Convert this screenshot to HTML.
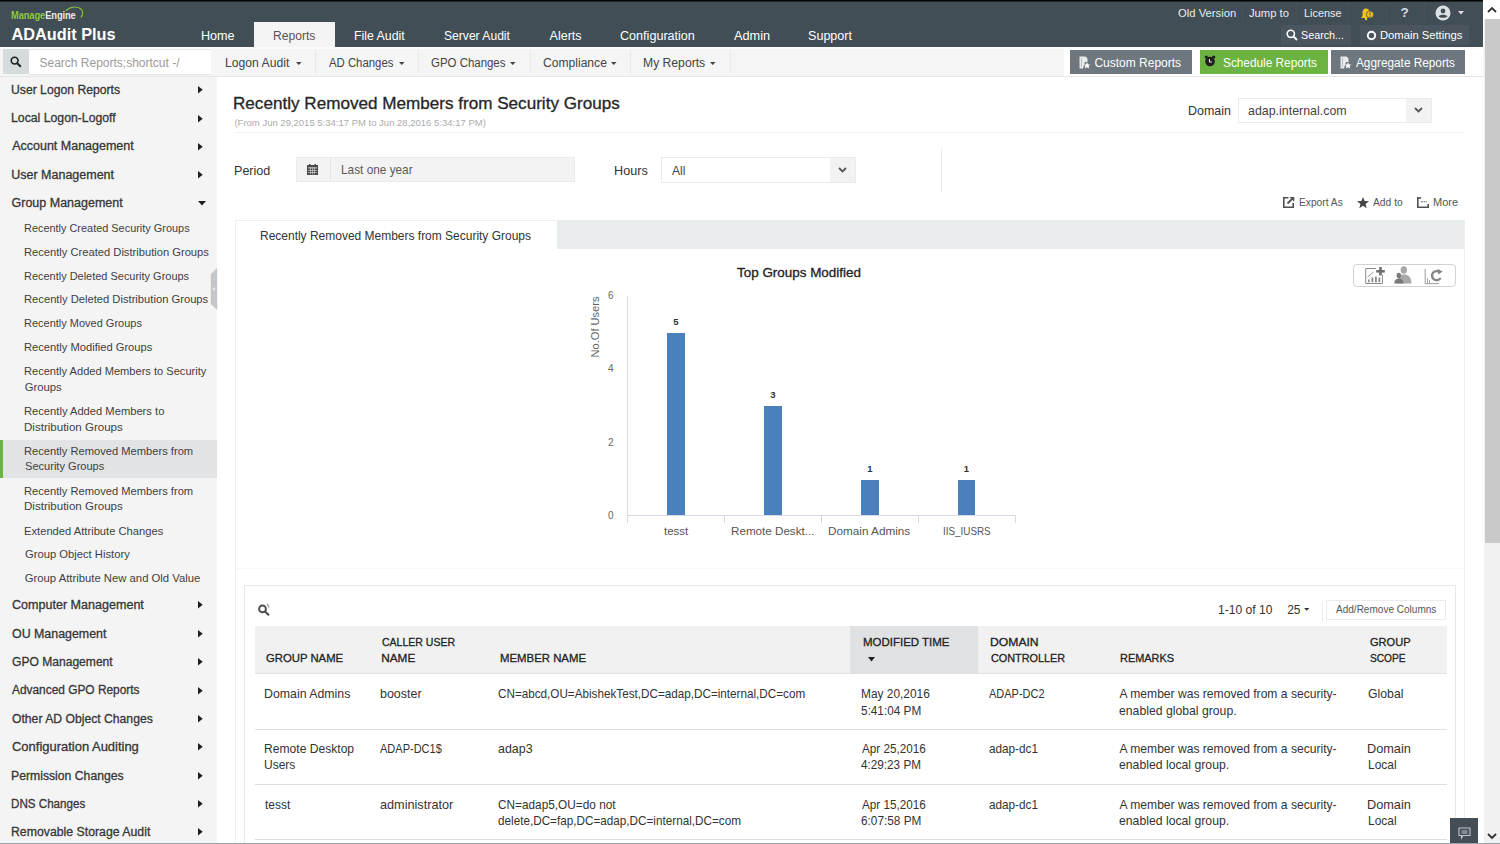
<!DOCTYPE html>
<html><head><meta charset="utf-8"><style>
*{box-sizing:border-box;margin:0;padding:0}
html,body{width:1500px;height:844px;overflow:hidden;background:#fff;font-family:"Liberation Sans",sans-serif;color:#333}
.a{position:absolute;white-space:nowrap;line-height:1}
svg{position:absolute;overflow:visible}
</style></head><body>
<div class="a" style="left:0px;top:0px;width:1483px;height:1px;background:#050505;"></div>
<div class="a" style="left:0px;top:1px;width:1483px;height:1px;background:#1f2427;"></div>
<div class="a" style="left:0px;top:2px;width:1483px;height:45px;background:#424e56;"></div>
<div class="a " style="left:11.30px;top:10.57px;font-size:10.2px;font-weight:700;color:#8dc641;transform:scaleX(0.915);transform-origin:0 0;letter-spacing:-0.1px">Manage<span style="color:#e6e9eb">Engine</span></div>
<svg style="left:63px;top:5px" width="22" height="16" viewBox="0 0 22 16"><path d="M3 5.5 C 8 1, 15 1, 18.5 4.5 C 20 6.5, 20 9.5, 18 12.5" fill="none" stroke="#8dc641" stroke-width="1.1"/></svg>
<div class="a " style="left:11.59px;top:25.90px;font-size:16.3px;font-weight:700;color:#ffffff;">ADAudit Plus</div>
<div class="a" style="left:254px;top:22px;width:81px;height:25px;background:#f4f4f4;"></div>
<div class="a " style="left:200.59px;top:30.02px;font-size:12.5px;font-weight:400;color:#fff;transform:scaleX(1.008);transform-origin:0 0;">Home</div>
<div class="a " style="left:273.03px;top:30.02px;font-size:12.5px;font-weight:400;color:#555;transform:scaleX(0.969);transform-origin:0 0;">Reports</div>
<div class="a " style="left:354.41px;top:30.02px;font-size:12.5px;font-weight:400;color:#fff;transform:scaleX(0.986);transform-origin:0 0;">File Audit</div>
<div class="a " style="left:444.16px;top:30.02px;font-size:12.5px;font-weight:400;color:#fff;transform:scaleX(0.968);transform-origin:0 0;">Server Audit</div>
<div class="a " style="left:549.60px;top:30.02px;font-size:12.5px;font-weight:400;color:#fff;">Alerts</div>
<div class="a " style="left:619.97px;top:30.02px;font-size:12.5px;font-weight:400;color:#fff;transform:scaleX(1.007);transform-origin:0 0;">Configuration</div>
<div class="a " style="left:733.50px;top:30.02px;font-size:12.5px;font-weight:400;color:#fff;transform:scaleX(1.017);transform-origin:0 0;">Admin</div>
<div class="a " style="left:807.73px;top:30.02px;font-size:12.5px;font-weight:400;color:#fff;transform:scaleX(1.006);transform-origin:0 0;">Support</div>
<div class="a " style="left:1178.29px;top:7.52px;font-size:11.2px;font-weight:400;color:#e9ecee;transform:scaleX(1.006);transform-origin:0 0;">Old Version</div>
<div class="a " style="left:1249.43px;top:7.52px;font-size:11.2px;font-weight:400;color:#e9ecee;transform:scaleX(1.005);transform-origin:0 0;">Jump to</div>
<div class="a " style="left:1303.73px;top:7.52px;font-size:11.2px;font-weight:400;color:#e9ecee;transform:scaleX(0.974);transform-origin:0 0;">License</div>
<div class="a" style="left:1242px;top:3px;width:1px;height:19px;background:#47525a;"></div>
<div class="a" style="left:1296px;top:3px;width:1px;height:19px;background:#47525a;"></div>
<div class="a" style="left:1348px;top:3px;width:1px;height:19px;background:#47525a;"></div>
<div class="a" style="left:1386px;top:3px;width:1px;height:19px;background:#47525a;"></div>
<div class="a" style="left:1424px;top:3px;width:1px;height:19px;background:#47525a;"></div>
<svg style="left:1359px;top:7px" width="16" height="13" viewBox="0 0 16 13"><path d="M2 11 L3.5 9 L3.5 5.5 C3.5 3 5 1.5 7 1.5 C9 1.5 10.5 3 10.5 5.5 L10.5 9 L12 11 Z" fill="#f0c419"/><circle cx="11" cy="7.5" r="3.6" fill="#f0c419" stroke="#424e56" stroke-width="0.8"/><rect x="10.5" y="5.5" width="1" height="2.6" fill="#424e56"/><rect x="10.5" y="8.8" width="1" height="1" fill="#424e56"/><circle cx="7" cy="12" r="1.2" fill="#f0c419"/></svg>
<div class="a " style="left:1400.50px;top:6.37px;font-size:13.5px;font-weight:700;color:#d9dde0;">?</div>
<svg style="left:1435px;top:5px" width="16" height="16" viewBox="0 0 16 16"><circle cx="8" cy="8" r="7.5" fill="#dde1e4"/><circle cx="8" cy="6" r="2.4" fill="#424e56"/><path d="M3.6 11.5 C4.5 9.2 11.5 9.2 12.4 11.5 C11 13.2 5 13.2 3.6 11.5Z" fill="#424e56"/></svg>
<svg style="left:1457.5px;top:10.5px" width="6" height="4" viewBox="0 0 6 4"><path d="M0 0 L6 0 L3 3.5Z" fill="#dde1e4"/></svg>
<div class="a" style="left:1280.5px;top:24.5px;width:70.5px;height:20.5px;background:#4a555d;"></div>
<div class="a" style="left:1359.5px;top:24.5px;width:109.5px;height:20.5px;background:#4a555d;"></div>
<svg style="left:1286px;top:29px" width="12" height="12" viewBox="0 0 12 12"><circle cx="4.8" cy="4.8" r="3.6" fill="none" stroke="#fff" stroke-width="1.6"/><path d="M7.5 7.5 L11 11" stroke="#fff" stroke-width="2"/></svg>
<div class="a " style="left:1301.32px;top:30.49px;font-size:11px;font-weight:400;color:#fff;transform:scaleX(0.978);transform-origin:0 0;">Search...</div>
<svg style="left:1366px;top:29.5px" width="11" height="11" viewBox="0 0 11 11"><circle cx="5.5" cy="5.5" r="3.7" fill="none" stroke="#fff" stroke-width="1.9"/></svg>
<div class="a " style="left:1379.80px;top:30.49px;font-size:11px;font-weight:400;color:#fff;transform:scaleX(1.020);transform-origin:0 0;">Domain Settings</div>
<div class="a" style="left:0px;top:47px;width:1484px;height:30px;background:#f5f5f5;border-bottom:1px solid #e6e6e6"></div>
<div class="a" style="left:0px;top:47px;width:1484px;height:2px;background:#fbfbfb;"></div>
<div class="a" style="left:3px;top:48.7px;width:26px;height:25.6px;background:#d6dbdd;"></div>
<div class="a" style="left:29px;top:48.7px;width:182px;height:26px;background:#e4e4e4;"></div>
<div class="a" style="left:29px;top:50.2px;width:182px;height:23.8px;background:#ffffff;"></div>
<svg style="left:9.5px;top:55.5px" width="12" height="12" viewBox="0 0 12 12"><circle cx="4.6" cy="4.6" r="3.4" fill="none" stroke="#1e1e1e" stroke-width="1.6"/><path d="M7.2 7.2 L10.8 10.8" stroke="#1e1e1e" stroke-width="2"/></svg>
<div class="a " style="left:39.46px;top:57.04px;font-size:12px;font-weight:400;color:#9a9a9a;">Search Reports;shortcut -/</div>
<div class="a " style="left:225.43px;top:57.24px;font-size:12px;font-weight:400;color:#444;transform:scaleX(1.014);transform-origin:0 0;">Logon Audit</div>
<svg style="left:296px;top:62px" width="5.5" height="3" viewBox="0 0 5.5 3"><path d="M0 0 L5.5 0 L2.75 3Z" fill="#444"/></svg>
<div class="a" style="left:315px;top:50px;width:1px;height:24px;background:#e9e9e9;"></div>
<div class="a " style="left:329.00px;top:57.24px;font-size:12px;font-weight:400;color:#444;transform:scaleX(0.946);transform-origin:0 0;">AD Changes</div>
<svg style="left:398.5px;top:62px" width="5.5" height="3" viewBox="0 0 5.5 3"><path d="M0 0 L5.5 0 L2.75 3Z" fill="#444"/></svg>
<div class="a" style="left:418px;top:50px;width:1px;height:24px;background:#e9e9e9;"></div>
<div class="a " style="left:431.03px;top:57.24px;font-size:12px;font-weight:400;color:#444;transform:scaleX(0.954);transform-origin:0 0;">GPO Changes</div>
<svg style="left:510px;top:62px" width="5.5" height="3" viewBox="0 0 5.5 3"><path d="M0 0 L5.5 0 L2.75 3Z" fill="#444"/></svg>
<div class="a" style="left:529.5px;top:50px;width:1px;height:24px;background:#e9e9e9;"></div>
<div class="a " style="left:542.70px;top:57.24px;font-size:12px;font-weight:400;color:#444;transform:scaleX(1.008);transform-origin:0 0;">Compliance</div>
<svg style="left:611px;top:62px" width="5.5" height="3" viewBox="0 0 5.5 3"><path d="M0 0 L5.5 0 L2.75 3Z" fill="#444"/></svg>
<div class="a" style="left:630px;top:50px;width:1px;height:24px;background:#e9e9e9;"></div>
<div class="a " style="left:643.33px;top:57.24px;font-size:12px;font-weight:400;color:#444;transform:scaleX(1.013);transform-origin:0 0;">My Reports</div>
<svg style="left:710px;top:62px" width="5.5" height="3" viewBox="0 0 5.5 3"><path d="M0 0 L5.5 0 L2.75 3Z" fill="#444"/></svg>
<div class="a" style="left:730px;top:50px;width:1px;height:24px;background:#e9e9e9;"></div>
<div class="a" style="left:1064px;top:48.5px;width:419px;height:27.7px;background:#ffffff;"></div>
<div class="a" style="left:1070px;top:50.3px;width:121.6px;height:23.3px;background:#6d777d;"></div>
<div class="a" style="left:1199.5px;top:50.3px;width:128.8px;height:23.3px;background:#6cb342;"></div>
<div class="a" style="left:1331px;top:50.3px;width:134.3px;height:23.3px;background:#6d777d;"></div>
<svg style="left:1079px;top:56px" width="12" height="13" viewBox="0 0 12 13"><path d="M0.5 0.5 L6.5 0.5 L8.5 2.5 L8.5 6 L6 6 L4 12.5 L0.5 12.5Z" fill="#e8eaeb"/><path d="M2 2 L3 2 L3 11 L2 11Z" fill="#6d777d" opacity="0.35"/><path d="M8 6.2 L9 8.4 L11.4 8.6 L9.6 10.1 L10.2 12.5 L8 11.2 L5.8 12.5 L6.4 10.1 L4.6 8.6 L7 8.4Z" fill="#fff"/></svg>
<div class="a " style="left:1094.40px;top:57.24px;font-size:12px;font-weight:400;color:#fff;">Custom Reports</div>
<svg style="left:1204px;top:55px" width="12" height="12" viewBox="0 0 12 12"><circle cx="6" cy="6.5" r="4.8" fill="#1e1e1e"/><circle cx="2.3" cy="2" r="1.6" fill="#1e1e1e"/><circle cx="9.7" cy="2" r="1.6" fill="#1e1e1e"/><path d="M5.5 4 L5.5 7 L8 7" stroke="#ddd" stroke-width="1.1" fill="none"/></svg>
<div class="a " style="left:1223.37px;top:57.24px;font-size:12px;font-weight:400;color:#fff;transform:scaleX(0.985);transform-origin:0 0;">Schedule Reports</div>
<svg style="left:1340px;top:56px" width="12" height="13" viewBox="0 0 12 13"><path d="M0.5 0.5 L6.5 0.5 L8.5 2.5 L8.5 6 L6 6 L4 12.5 L0.5 12.5Z" fill="#e8eaeb"/><path d="M2 2 L3 2 L3 11 L2 11Z" fill="#6d777d" opacity="0.35"/><path d="M8 6.2 L9 8.4 L11.4 8.6 L9.6 10.1 L10.2 12.5 L8 11.2 L5.8 12.5 L6.4 10.1 L4.6 8.6 L7 8.4Z" fill="#fff"/></svg>
<div class="a " style="left:1356.40px;top:57.24px;font-size:12px;font-weight:400;color:#fff;transform:scaleX(0.983);transform-origin:0 0;">Aggregate Reports</div>
<div class="a" style="left:0px;top:77px;width:216.7px;height:767px;background:#f4f4f4;"></div>
<div class="a " style="left:11.24px;top:84.22px;font-size:12.5px;font-weight:400;color:#363636;transform:scaleX(0.975);transform-origin:0 0;-webkit-text-stroke:0.3px #363636;">User Logon Reports</div>
<svg style="left:197.6px;top:86.4px" width="5" height="7.4" viewBox="0 0 5 7.4"><path d="M0 0 L4.7 3.7 L0 7.4Z" fill="#1e1e1e"/></svg>
<div class="a " style="left:11.17px;top:112.32px;font-size:12.5px;font-weight:400;color:#363636;transform:scaleX(0.980);transform-origin:0 0;-webkit-text-stroke:0.3px #363636;">Local Logon-Logoff</div>
<svg style="left:197.6px;top:114.5px" width="5" height="7.4" viewBox="0 0 5 7.4"><path d="M0 0 L4.7 3.7 L0 7.4Z" fill="#1e1e1e"/></svg>
<div class="a " style="left:12.15px;top:140.32px;font-size:12.5px;font-weight:400;color:#363636;-webkit-text-stroke:0.3px #363636;">Account Management</div>
<svg style="left:197.6px;top:142.5px" width="5" height="7.4" viewBox="0 0 5 7.4"><path d="M0 0 L4.7 3.7 L0 7.4Z" fill="#1e1e1e"/></svg>
<div class="a " style="left:11.21px;top:169.12px;font-size:12.5px;font-weight:400;color:#363636;-webkit-text-stroke:0.3px #363636;">User Management</div>
<svg style="left:197.6px;top:171.3px" width="5" height="7.4" viewBox="0 0 5 7.4"><path d="M0 0 L4.7 3.7 L0 7.4Z" fill="#1e1e1e"/></svg>
<div class="a " style="left:11.53px;top:196.82px;font-size:12.5px;font-weight:400;color:#363636;-webkit-text-stroke:0.3px #363636;">Group Management</div>
<svg style="left:198px;top:201.2px" width="8" height="5" viewBox="0 0 8 5"><path d="M0 0 L8 0 L4 4.4Z" fill="#1e1e1e"/></svg>
<div class="a" style="left:0px;top:439.5px;width:216.7px;height:38px;background:#e2e3e5;"></div>
<div class="a" style="left:0px;top:439.5px;width:3px;height:38px;background:#6cb33f;"></div>
<div class="a " style="left:24.43px;top:223.13px;font-size:11.3px;font-weight:400;color:#3f3f3f;transform:scaleX(0.966);transform-origin:0 0;">Recently Created Security Groups</div>
<div class="a " style="left:24.41px;top:246.63px;font-size:11.3px;font-weight:400;color:#3f3f3f;transform:scaleX(0.988);transform-origin:0 0;">Recently Created Distribution Groups</div>
<div class="a " style="left:24.42px;top:270.53px;font-size:11.3px;font-weight:400;color:#3f3f3f;transform:scaleX(0.970);transform-origin:0 0;">Recently Deleted Security Groups</div>
<div class="a " style="left:24.40px;top:294.43px;font-size:11.3px;font-weight:400;color:#3f3f3f;transform:scaleX(0.991);transform-origin:0 0;">Recently Deleted Distribution Groups</div>
<div class="a " style="left:24.42px;top:318.33px;font-size:11.3px;font-weight:400;color:#3f3f3f;transform:scaleX(0.973);transform-origin:0 0;">Recently Moved Groups</div>
<div class="a " style="left:24.41px;top:342.13px;font-size:11.3px;font-weight:400;color:#3f3f3f;transform:scaleX(0.987);transform-origin:0 0;">Recently Modified Groups</div>
<div class="a " style="left:24.41px;top:366.43px;font-size:11.3px;font-weight:400;color:#3f3f3f;transform:scaleX(0.981);transform-origin:0 0;">Recently Added Members to Security</div>
<div class="a " style="left:24.73px;top:381.83px;font-size:11.3px;font-weight:400;color:#3f3f3f;">Groups</div>
<div class="a " style="left:24.41px;top:406.23px;font-size:11.3px;font-weight:400;color:#3f3f3f;transform:scaleX(0.989);transform-origin:0 0;">Recently Added Members to</div>
<div class="a " style="left:24.38px;top:421.63px;font-size:11.3px;font-weight:400;color:#3f3f3f;transform:scaleX(1.022);transform-origin:0 0;">Distribution Groups</div>
<div class="a " style="left:24.41px;top:446.03px;font-size:11.3px;font-weight:400;color:#3f3f3f;transform:scaleX(0.987);transform-origin:0 0;">Recently Removed Members from</div>
<div class="a " style="left:24.80px;top:461.43px;font-size:11.3px;font-weight:400;color:#3f3f3f;transform:scaleX(0.979);transform-origin:0 0;">Security Groups</div>
<div class="a " style="left:24.41px;top:485.73px;font-size:11.3px;font-weight:400;color:#3f3f3f;transform:scaleX(0.987);transform-origin:0 0;">Recently Removed Members from</div>
<div class="a " style="left:24.38px;top:501.13px;font-size:11.3px;font-weight:400;color:#3f3f3f;transform:scaleX(1.022);transform-origin:0 0;">Distribution Groups</div>
<div class="a " style="left:24.41px;top:525.53px;font-size:11.3px;font-weight:400;color:#3f3f3f;transform:scaleX(0.990);transform-origin:0 0;">Extended Attribute Changes</div>
<div class="a " style="left:24.74px;top:549.23px;font-size:11.3px;font-weight:400;color:#3f3f3f;transform:scaleX(0.993);transform-origin:0 0;">Group Object History</div>
<div class="a " style="left:24.73px;top:573.33px;font-size:11.3px;font-weight:400;color:#3f3f3f;">Group Attribute New and Old Value</div>
<svg style="left:209.5px;top:267.5px" width="8" height="42" viewBox="0 0 8 42"><path d="M7.2 0 L7.2 42 L0.8 36 L0.8 6Z" fill="#c3c7ca"/><path d="M2.6 21 L4.6 19 L4.6 23Z" fill="#f4f4f4"/></svg>
<div class="a " style="left:11.52px;top:599.22px;font-size:12.5px;font-weight:400;color:#363636;transform:scaleX(1.004);transform-origin:0 0;-webkit-text-stroke:0.3px #363636;">Computer Management</div>
<svg style="left:197.6px;top:601.4px" width="5" height="7.4" viewBox="0 0 5 7.4"><path d="M0 0 L4.7 3.7 L0 7.4Z" fill="#1e1e1e"/></svg>
<div class="a " style="left:11.59px;top:627.60px;font-size:12.5px;font-weight:400;color:#363636;transform:scaleX(0.992);transform-origin:0 0;-webkit-text-stroke:0.3px #363636;">OU Management</div>
<svg style="left:197.6px;top:629.78px" width="5" height="7.4" viewBox="0 0 5 7.4"><path d="M0 0 L4.7 3.7 L0 7.4Z" fill="#1e1e1e"/></svg>
<div class="a " style="left:11.55px;top:655.98px;font-size:12.5px;font-weight:400;color:#363636;transform:scaleX(0.966);transform-origin:0 0;-webkit-text-stroke:0.3px #363636;">GPO Management</div>
<svg style="left:197.6px;top:658.16px" width="5" height="7.4" viewBox="0 0 5 7.4"><path d="M0 0 L4.7 3.7 L0 7.4Z" fill="#1e1e1e"/></svg>
<div class="a " style="left:12.15px;top:684.36px;font-size:12.5px;font-weight:400;color:#363636;transform:scaleX(0.951);transform-origin:0 0;-webkit-text-stroke:0.3px #363636;">Advanced GPO Reports</div>
<svg style="left:197.6px;top:686.54px" width="5" height="7.4" viewBox="0 0 5 7.4"><path d="M0 0 L4.7 3.7 L0 7.4Z" fill="#1e1e1e"/></svg>
<div class="a " style="left:11.60px;top:712.74px;font-size:12.5px;font-weight:400;color:#363636;transform:scaleX(0.974);transform-origin:0 0;-webkit-text-stroke:0.3px #363636;">Other AD Object Changes</div>
<svg style="left:197.6px;top:714.92px" width="5" height="7.4" viewBox="0 0 5 7.4"><path d="M0 0 L4.7 3.7 L0 7.4Z" fill="#1e1e1e"/></svg>
<div class="a " style="left:11.50px;top:741.12px;font-size:12.5px;font-weight:400;color:#363636;transform:scaleX(1.037);transform-origin:0 0;-webkit-text-stroke:0.3px #363636;">Configuration Auditing</div>
<svg style="left:197.6px;top:743.3px" width="5" height="7.4" viewBox="0 0 5 7.4"><path d="M0 0 L4.7 3.7 L0 7.4Z" fill="#1e1e1e"/></svg>
<div class="a " style="left:11.17px;top:769.50px;font-size:12.5px;font-weight:400;color:#363636;transform:scaleX(0.977);transform-origin:0 0;-webkit-text-stroke:0.3px #363636;">Permission Changes</div>
<svg style="left:197.6px;top:771.68px" width="5" height="7.4" viewBox="0 0 5 7.4"><path d="M0 0 L4.7 3.7 L0 7.4Z" fill="#1e1e1e"/></svg>
<div class="a " style="left:11.22px;top:797.88px;font-size:12.5px;font-weight:400;color:#363636;transform:scaleX(0.929);transform-origin:0 0;-webkit-text-stroke:0.3px #363636;">DNS Changes</div>
<svg style="left:197.6px;top:800.06px" width="5" height="7.4" viewBox="0 0 5 7.4"><path d="M0 0 L4.7 3.7 L0 7.4Z" fill="#1e1e1e"/></svg>
<div class="a " style="left:11.17px;top:826.26px;font-size:12.5px;font-weight:400;color:#363636;transform:scaleX(0.983);transform-origin:0 0;-webkit-text-stroke:0.3px #363636;">Removable Storage Audit</div>
<svg style="left:197.6px;top:828.4399999999999px" width="5" height="7.4" viewBox="0 0 5 7.4"><path d="M0 0 L4.7 3.7 L0 7.4Z" fill="#1e1e1e"/></svg>
<div class="a " style="left:233.38px;top:95.78px;font-size:16.8px;font-weight:400;color:#262626;transform:scaleX(1.019);transform-origin:0 0;-webkit-text-stroke:0.3px #262626;">Recently Removed Members from Security Groups</div>
<div class="a " style="left:234.43px;top:117.56px;font-size:9.5px;font-weight:400;color:#ababab;">(From Jun 29,2015 5:34:17 PM to Jun 28,2016 5:34:17 PM)</div>
<div class="a" style="left:235px;top:132px;width:1230px;height:1px;background:#f1f1f1;"></div>
<div class="a " style="left:1188.40px;top:104.50px;font-size:12.4px;font-weight:400;color:#333;transform:scaleX(1.007);transform-origin:0 0;">Domain</div>
<div class="a" style="left:1237.6px;top:98px;width:194px;height:24.6px;background:#fff;border:1px solid #ebebeb"></div>
<div class="a" style="left:1405.6px;top:98px;width:26px;height:24.6px;background:#f2f2f2;border:1px solid #ebebeb;border-left:none"></div>
<div class="a " style="left:1248.10px;top:104.67px;font-size:12.2px;font-weight:400;color:#444;transform:scaleX(1.018);transform-origin:0 0;">adap.internal.com</div>
<svg style="left:1414px;top:107px" width="9" height="6" viewBox="0 0 9 6"><path d="M1 1 L4.5 4.5 L8 1" fill="none" stroke="#555" stroke-width="1.8"/></svg>
<div class="a " style="left:233.99px;top:164.60px;font-size:12.4px;font-weight:400;color:#333;transform:scaleX(1.014);transform-origin:0 0;">Period</div>
<div class="a" style="left:296px;top:157px;width:278.5px;height:24.5px;background:#f3f3f3;border:1px solid #ebebeb"></div>
<div class="a" style="left:330px;top:158px;width:1px;height:22.5px;background:#e4e4e4;"></div>
<svg style="left:307px;top:164px" width="11" height="11" viewBox="0 0 11 11"><rect x="0" y="1" width="11" height="10" fill="#4a4a4a"/><rect x="2" y="0" width="1.5" height="2" fill="#4a4a4a"/><rect x="7.5" y="0" width="1.5" height="2" fill="#4a4a4a"/><g fill="#f3f3f3"><rect x="1" y="3.5" width="9" height="0.8"/><rect x="1" y="6" width="9" height="0.5"/><rect x="1" y="8.2" width="9" height="0.5"/><rect x="3.2" y="3.5" width="0.5" height="7"/><rect x="5.3" y="3.5" width="0.5" height="7"/><rect x="7.4" y="3.5" width="0.5" height="7"/></g></svg>
<div class="a " style="left:340.65px;top:164.07px;font-size:12.2px;font-weight:400;color:#5a5a5a;transform:scaleX(0.970);transform-origin:0 0;">Last one year</div>
<div class="a " style="left:613.69px;top:164.60px;font-size:12.4px;font-weight:400;color:#333;transform:scaleX(1.020);transform-origin:0 0;">Hours</div>
<div class="a" style="left:661px;top:157.2px;width:194.5px;height:26.3px;background:#fff;border:1px solid #ebebeb"></div>
<div class="a" style="left:830px;top:157.2px;width:25.5px;height:26.3px;background:#f2f2f2;border:1px solid #ebebeb;border-left:none"></div>
<div class="a " style="left:672.40px;top:165.24px;font-size:12px;font-weight:400;color:#444;transform:scaleX(1.005);transform-origin:0 0;">All</div>
<svg style="left:838px;top:166.5px" width="9" height="6" viewBox="0 0 9 6"><path d="M1 1 L4.5 4.5 L8 1" fill="none" stroke="#555" stroke-width="1.8"/></svg>
<div class="a" style="left:940.5px;top:147.5px;width:1px;height:44.5px;background:#ededed;"></div>
<svg style="left:1282.5px;top:197.3px" width="12" height="11" viewBox="0 0 12 11"><path d="M5.5 0.8 L0.8 0.8 L0.8 10.2 L10.2 10.2 L10.2 6" fill="none" stroke="#505050" stroke-width="1.6"/><path d="M4.5 6.5 L9.5 1.5" stroke="#505050" stroke-width="1.8"/><path d="M6.5 0 L11.3 0 L11.3 4.8Z" fill="#505050"/></svg>
<div class="a " style="left:1298.58px;top:197.43px;font-size:10.6px;font-weight:400;color:#555;transform:scaleX(0.965);transform-origin:0 0;">Export As</div>
<svg style="left:1357px;top:196.5px" width="12" height="11.5" viewBox="0 0 12 11.5"><path d="M6 0 L7.6 4 L12 4.2 L8.5 6.9 L9.7 11.3 L6 8.8 L2.3 11.3 L3.5 6.9 L0 4.2 L4.4 4Z" fill="#444"/></svg>
<div class="a " style="left:1373.00px;top:197.43px;font-size:10.6px;font-weight:400;color:#555;transform:scaleX(0.970);transform-origin:0 0;">Add to</div>
<svg style="left:1416.8px;top:197.3px" width="12" height="11" viewBox="0 0 12 11"><path d="M0.8 0 L0.8 10.2 L11.2 10.2 L11.2 7" fill="none" stroke="#505050" stroke-width="1.6"/><path d="M0.8 1 L4 1" stroke="#505050" stroke-width="1.6"/><path d="M4 4.8 L10 4.8" stroke="#505050" stroke-width="1.1" stroke-dasharray="1.6 1"/></svg>
<div class="a " style="left:1432.71px;top:197.43px;font-size:10.6px;font-weight:400;color:#555;transform:scaleX(1.044);transform-origin:0 0;">More</div>
<div class="a" style="left:235px;top:220px;width:1230px;height:624px;background:#fff;border:1px solid #eeeeee;border-bottom:none"></div>
<div class="a" style="left:557px;top:221px;width:907px;height:28px;background:#e9eced;"></div>
<div class="a " style="left:260.44px;top:230.17px;font-size:12.2px;font-weight:400;color:#333;transform:scaleX(0.983);transform-origin:0 0;">Recently Removed Members from Security Groups</div>
<div class="a " style="left:736.88px;top:266.00px;font-size:13px;font-weight:400;color:#222;transform:scaleX(1.033);transform-origin:0 0;-webkit-text-stroke:0.3px #222;">Top Groups Modified</div>
<div class="a" style="left:1353.3px;top:264px;width:102.3px;height:22.5px;background:#fff;border:1px solid #d2d2d2;border-radius:4px"></div>
<svg style="left:1350px;top:260px" width="110" height="30" viewBox="0 0 110 30"><path d="M26 8.5 L15.7 8.5 L15.7 23.5 L32.5 23.5 L32.5 15" fill="none" stroke="#8c8c8c" stroke-width="1"/><g fill="#8c8c8c"><rect x="18" y="19.5" width="1.6" height="2.8"/><rect x="21.5" y="17.5" width="1.8" height="4.8"/><rect x="25" y="16.5" width="1.8" height="5.8"/><rect x="28.5" y="17.5" width="1.8" height="4.8"/></g><path d="M17.5 17 L23.5 12" stroke="#9a9a9a" stroke-width="1" fill="none"/><g fill="#6e6e6e"><rect x="29.2" y="7" width="2.6" height="8.5"/><rect x="26.2" y="10" width="8.6" height="2.6"/></g><g fill="#a8a8a8"><ellipse cx="53.8" cy="10" rx="3.2" ry="3.8"/><path d="M47 23.6 C47 17 50 14.5 54 14.5 C58 14.5 61.5 17 61.5 23.6Z"/></g><g fill="#7a7a7a"><ellipse cx="48.8" cy="15.4" rx="2.2" ry="2.7"/><path d="M44.3 23.6 C44.3 20 46 18.8 48.8 18.8 C51.6 18.8 53.5 20 53.5 23.6Z"/></g><path d="M75.2 9 L75.2 23.6 L89 23.6" fill="none" stroke="#9a9a9a" stroke-width="1"/><g fill="#a8a8a8"><rect x="77" y="18" width="1" height="5.6"/><rect x="79" y="20" width="1" height="3.6"/></g><path d="M90 12.5 A4.6 4.6 0 1 0 90.6 18" fill="none" stroke="#858585" stroke-width="2.3"/><path d="M87.5 8.8 L92.6 11.6 L88.4 14.6Z" fill="#858585"/></svg>
<div class="a" style="left:627px;top:296px;width:1px;height:220px;background:#d6dbe6;"></div>
<div class="a" style="left:627px;top:515px;width:389px;height:1px;background:#d6dbe6;"></div>
<div class="a" style="left:627px;top:515px;width:1px;height:8px;background:#d6dbe6;"></div>
<div class="a" style="left:724px;top:515px;width:1px;height:8px;background:#d6dbe6;"></div>
<div class="a" style="left:821px;top:515px;width:1px;height:8px;background:#d6dbe6;"></div>
<div class="a" style="left:918px;top:515px;width:1px;height:8px;background:#d6dbe6;"></div>
<div class="a" style="left:1015px;top:515px;width:1px;height:8px;background:#d6dbe6;"></div>
<div class="a " style="left:608.00px;top:291.14px;font-size:10px;font-weight:400;color:#666;">6</div>
<div class="a " style="left:608.00px;top:364.34px;font-size:10px;font-weight:400;color:#666;">4</div>
<div class="a " style="left:608.00px;top:437.54px;font-size:10px;font-weight:400;color:#666;">2</div>
<div class="a " style="left:608.00px;top:510.83px;font-size:10px;font-weight:400;color:#666;">0</div>
<div class="a" style="left:595.5px;top:326.5px;font-size:11.1px;color:#666;transform:translate(-50%,-50%) rotate(-90deg)">No.Of Users</div>
<div class="a" style="left:667px;top:333px;width:17.6px;height:182px;background:#4a81bd;"></div>
<div class="a" style="left:675.8px;top:316.5px;font-size:9.5px;font-weight:700;color:#333;transform:translateX(-50%)">5</div>
<div class="a" style="left:764px;top:406px;width:17.6px;height:109px;background:#4a81bd;"></div>
<div class="a" style="left:772.8px;top:389.5px;font-size:9.5px;font-weight:700;color:#333;transform:translateX(-50%)">3</div>
<div class="a" style="left:861px;top:480px;width:17.6px;height:35px;background:#4a81bd;"></div>
<div class="a" style="left:869.8px;top:463.5px;font-size:9.5px;font-weight:700;color:#333;transform:translateX(-50%)">1</div>
<div class="a" style="left:957.5px;top:480px;width:17.6px;height:35px;background:#4a81bd;"></div>
<div class="a" style="left:966.3px;top:463.5px;font-size:9.5px;font-weight:700;color:#333;transform:translateX(-50%)">1</div>
<div class="a " style="left:663.83px;top:524.98px;font-size:11.6px;font-weight:400;color:#555;transform:scaleX(0.990);transform-origin:0 0;">tesst</div>
<div class="a " style="left:731.07px;top:524.98px;font-size:11.6px;font-weight:400;color:#555;transform:scaleX(1.004);transform-origin:0 0;">Remote Deskt...</div>
<div class="a " style="left:828.06px;top:524.98px;font-size:11.6px;font-weight:400;color:#555;transform:scaleX(1.013);transform-origin:0 0;">Domain Admins</div>
<div class="a " style="left:942.51px;top:524.98px;font-size:11.6px;font-weight:400;color:#555;transform:scaleX(0.850);transform-origin:0 0;">IIS_IUSRS</div>
<div class="a" style="left:236px;top:568px;width:1228px;height:1px;background:#f8f8f8;"></div>
<div class="a" style="left:244.4px;top:585.4px;width:1211.5px;height:259px;background:#fff;border:1px solid #e8e8e8;border-bottom:none"></div>
<svg style="left:258px;top:603px" width="13" height="14" viewBox="0 0 13 14"><circle cx="4.5" cy="5.9" r="3.4" fill="none" stroke="#4e4e4e" stroke-width="1.9"/><path d="M7 8.4 L11 12.2" stroke="#4e4e4e" stroke-width="2.1"/><path d="M9.3 0.8 L10.9 4.6" stroke="#9a9a9a" stroke-width="1.4"/></svg>
<div class="a " style="left:1217.99px;top:604.44px;font-size:12px;font-weight:400;color:#333;transform:scaleX(1.006);transform-origin:0 0;">1-10 of 10</div>
<div class="a " style="left:1287.20px;top:603.54px;font-size:12px;font-weight:400;color:#333;">25</div>
<svg style="left:1304px;top:608px" width="5.4" height="2.8" viewBox="0 0 5.4 2.8"><path d="M0 0 L5.4 0 L2.7 2.8Z" fill="#333"/></svg>
<div class="a" style="left:1321.5px;top:600px;width:1px;height:21px;background:#ededed;"></div>
<div class="a" style="left:1326px;top:599.8px;width:119.7px;height:20.7px;background:#fff;border:1px solid #ececec"></div>
<div class="a " style="left:1335.90px;top:605.48px;font-size:10.3px;font-weight:400;color:#555;transform:scaleX(0.974);transform-origin:0 0;">Add/Remove Columns</div>
<div class="a" style="left:254.6px;top:625.6px;width:1192px;height:48px;background:#f1f1f1;border-bottom:1px solid #e0e0e0"></div>
<div class="a" style="left:850.4px;top:625.6px;width:127.2px;height:47.4px;background:#e0e1e2;"></div>
<div class="a " style="left:266.18px;top:652.91px;font-size:11.8px;font-weight:400;color:#222;transform:scaleX(0.959);transform-origin:0 0;-webkit-text-stroke:0.3px #222;">GROUP NAME</div>
<div class="a " style="left:381.62px;top:636.51px;font-size:11.8px;font-weight:400;color:#222;transform:scaleX(0.892);transform-origin:0 0;-webkit-text-stroke:0.3px #222;">CALLER USER</div>
<div class="a " style="left:381.20px;top:652.91px;font-size:11.8px;font-weight:400;color:#222;-webkit-text-stroke:0.3px #222;">NAME</div>
<div class="a " style="left:500.24px;top:652.91px;font-size:11.8px;font-weight:400;color:#222;transform:scaleX(0.965);transform-origin:0 0;-webkit-text-stroke:0.3px #222;">MEMBER NAME</div>
<div class="a " style="left:862.83px;top:636.51px;font-size:11.8px;font-weight:400;color:#222;transform:scaleX(0.973);transform-origin:0 0;-webkit-text-stroke:0.3px #222;">MODIFIED TIME</div>
<div class="a " style="left:990.18px;top:636.51px;font-size:11.8px;font-weight:400;color:#222;transform:scaleX(1.031);transform-origin:0 0;-webkit-text-stroke:0.3px #222;">DOMAIN</div>
<div class="a " style="left:990.61px;top:652.91px;font-size:11.8px;font-weight:400;color:#222;transform:scaleX(0.920);transform-origin:0 0;-webkit-text-stroke:0.3px #222;">CONTROLLER</div>
<div class="a " style="left:1120.18px;top:652.91px;font-size:11.8px;font-weight:400;color:#222;transform:scaleX(0.927);transform-origin:0 0;-webkit-text-stroke:0.3px #222;">REMARKS</div>
<div class="a " style="left:1369.60px;top:636.51px;font-size:11.8px;font-weight:400;color:#222;transform:scaleX(0.937);transform-origin:0 0;-webkit-text-stroke:0.3px #222;">GROUP</div>
<div class="a " style="left:1369.69px;top:652.91px;font-size:11.8px;font-weight:400;color:#222;transform:scaleX(0.861);transform-origin:0 0;-webkit-text-stroke:0.3px #222;">SCOPE</div>
<svg style="left:868px;top:656.5px" width="7" height="4.5" viewBox="0 0 7 4.5"><path d="M0 0 L7 0 L3.5 4.5Z" fill="#222"/></svg>
<div class="a " style="left:264.01px;top:688.36px;font-size:12.1px;font-weight:400;color:#333;transform:scaleX(1.020);transform-origin:0 0;">Domain Admins</div>
<div class="a " style="left:379.59px;top:688.36px;font-size:12.1px;font-weight:400;color:#333;transform:scaleX(1.031);transform-origin:0 0;">booster</div>
<div class="a " style="left:498.31px;top:688.36px;font-size:12.1px;font-weight:400;color:#333;transform:scaleX(0.967);transform-origin:0 0;">CN=abcd,OU=AbishekTest,DC=adap,DC=internal,DC=com</div>
<div class="a " style="left:860.65px;top:688.36px;font-size:12.1px;font-weight:400;color:#333;transform:scaleX(0.984);transform-origin:0 0;">May 20,2016</div>
<div class="a " style="left:861.13px;top:704.56px;font-size:12.1px;font-weight:400;color:#333;transform:scaleX(0.974);transform-origin:0 0;">5:41:04 PM</div>
<div class="a " style="left:989.00px;top:688.36px;font-size:12.1px;font-weight:400;color:#333;transform:scaleX(0.908);transform-origin:0 0;">ADAP-DC2</div>
<div class="a " style="left:1119.50px;top:688.36px;font-size:12.1px;font-weight:400;color:#333;">A member was removed from a security-</div>
<div class="a " style="left:1119.01px;top:704.56px;font-size:12.1px;font-weight:400;color:#333;transform:scaleX(1.011);transform-origin:0 0;">enabled global group.</div>
<div class="a " style="left:1367.89px;top:688.36px;font-size:12.1px;font-weight:400;color:#333;transform:scaleX(1.013);transform-origin:0 0;">Global</div>
<div class="a " style="left:264.03px;top:743.16px;font-size:12.1px;font-weight:400;color:#333;">Remote Desktop</div>
<div class="a " style="left:264.10px;top:759.36px;font-size:12.1px;font-weight:400;color:#333;transform:scaleX(0.992);transform-origin:0 0;">Users</div>
<div class="a " style="left:380.40px;top:743.16px;font-size:12.1px;font-weight:400;color:#333;transform:scaleX(0.910);transform-origin:0 0;">ADAP-DC1$</div>
<div class="a " style="left:498.40px;top:743.16px;font-size:12.1px;font-weight:400;color:#333;transform:scaleX(1.028);transform-origin:0 0;">adap3</div>
<div class="a " style="left:861.60px;top:743.16px;font-size:12.1px;font-weight:400;color:#333;transform:scaleX(0.969);transform-origin:0 0;">Apr 25,2016</div>
<div class="a " style="left:861.37px;top:759.36px;font-size:12.1px;font-weight:400;color:#333;transform:scaleX(0.970);transform-origin:0 0;">4:29:23 PM</div>
<div class="a " style="left:988.53px;top:743.16px;font-size:12.1px;font-weight:400;color:#333;transform:scaleX(0.971);transform-origin:0 0;">adap-dc1</div>
<div class="a " style="left:1119.50px;top:743.16px;font-size:12.1px;font-weight:400;color:#333;">A member was removed from a security-</div>
<div class="a " style="left:1119.01px;top:759.36px;font-size:12.1px;font-weight:400;color:#333;transform:scaleX(1.011);transform-origin:0 0;">enabled local group.</div>
<div class="a " style="left:1367.48px;top:743.16px;font-size:12.1px;font-weight:400;color:#333;transform:scaleX(1.052);transform-origin:0 0;">Domain</div>
<div class="a " style="left:1367.54px;top:759.36px;font-size:12.1px;font-weight:400;color:#333;transform:scaleX(0.987);transform-origin:0 0;">Local</div>
<div class="a " style="left:264.82px;top:798.56px;font-size:12.1px;font-weight:400;color:#333;transform:scaleX(0.989);transform-origin:0 0;">tesst</div>
<div class="a " style="left:379.89px;top:798.56px;font-size:12.1px;font-weight:400;color:#333;transform:scaleX(1.049);transform-origin:0 0;">administrator</div>
<div class="a " style="left:498.31px;top:798.56px;font-size:12.1px;font-weight:400;color:#333;transform:scaleX(0.977);transform-origin:0 0;">CN=adap5,OU=do not</div>
<div class="a " style="left:498.43px;top:814.76px;font-size:12.1px;font-weight:400;color:#333;transform:scaleX(0.969);transform-origin:0 0;">delete,DC=fap,DC=adap,DC=internal,DC=com</div>
<div class="a " style="left:861.60px;top:798.56px;font-size:12.1px;font-weight:400;color:#333;transform:scaleX(0.969);transform-origin:0 0;">Apr 15,2016</div>
<div class="a " style="left:861.01px;top:814.76px;font-size:12.1px;font-weight:400;color:#333;transform:scaleX(0.976);transform-origin:0 0;">6:07:58 PM</div>
<div class="a " style="left:988.53px;top:798.56px;font-size:12.1px;font-weight:400;color:#333;transform:scaleX(0.971);transform-origin:0 0;">adap-dc1</div>
<div class="a " style="left:1119.50px;top:798.56px;font-size:12.1px;font-weight:400;color:#333;">A member was removed from a security-</div>
<div class="a " style="left:1119.01px;top:814.76px;font-size:12.1px;font-weight:400;color:#333;transform:scaleX(1.011);transform-origin:0 0;">enabled local group.</div>
<div class="a " style="left:1367.48px;top:798.56px;font-size:12.1px;font-weight:400;color:#333;transform:scaleX(1.052);transform-origin:0 0;">Domain</div>
<div class="a " style="left:1367.54px;top:814.76px;font-size:12.1px;font-weight:400;color:#333;transform:scaleX(0.987);transform-origin:0 0;">Local</div>
<div class="a" style="left:254.6px;top:729px;width:1192px;height:1px;background:#dedede;"></div>
<div class="a" style="left:254.6px;top:784.4px;width:1192px;height:1px;background:#dedede;"></div>
<div class="a" style="left:254.6px;top:838.6px;width:1192px;height:1px;background:#dedede;"></div>
<div class="a" style="left:1484px;top:0px;width:16px;height:844px;background:#f1f1f1;"></div>
<div class="a" style="left:1484px;top:0px;width:16px;height:19px;background:#fff;"></div>
<div class="a" style="left:1484.5px;top:19px;width:15.5px;height:523.5px;background:#c9c9c9;"></div>
<svg style="left:1487px;top:7px" width="10" height="6" viewBox="0 0 10 6"><path d="M1 5 L5 1 L9 5" fill="none" stroke="#333" stroke-width="1.8"/></svg>
<svg style="left:1487px;top:833px" width="10" height="6" viewBox="0 0 10 6"><path d="M1 1 L5 5 L9 1" fill="none" stroke="#333" stroke-width="1.8"/></svg>
<div class="a" style="left:1450px;top:818px;width:28px;height:26px;background:#434e56;"></div>
<svg style="left:1458px;top:826.5px" width="13" height="12" viewBox="0 0 13 12"><path d="M1 1 L12 1 L12 8.5 L5 8.5 L3.5 11 L3.5 8.5 L1 8.5Z" fill="none" stroke="#bfc5c9" stroke-width="1.1"/><rect x="3.5" y="3.5" width="6" height="1" fill="#bfc5c9"/><rect x="3.5" y="5.5" width="6" height="1" fill="#bfc5c9"/></svg>
<div class="a" style="left:0px;top:843px;width:1500px;height:1px;background:#9aa0a7;"></div>
</body></html>
